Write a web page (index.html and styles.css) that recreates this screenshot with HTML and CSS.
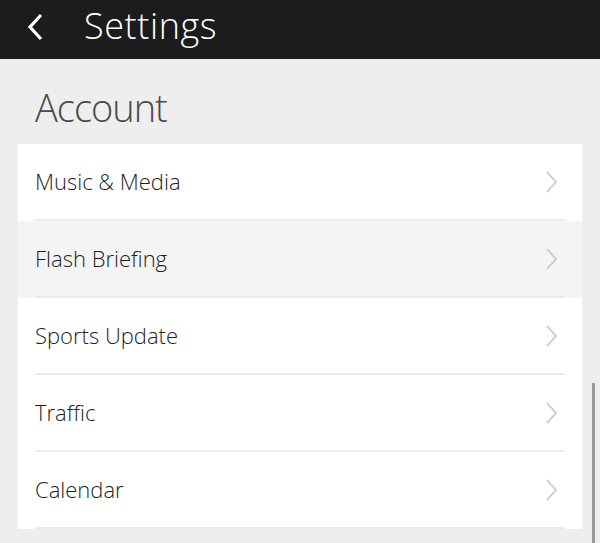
FILE: index.html
```html
<!DOCTYPE html>
<html>
<head>
<meta charset="utf-8">
<link rel="stylesheet" href="styles.css">
</head>
<body>
<header class="topbar">
  <span class="back">
    <svg width="20" height="30" viewBox="0 0 20 30"><path d="M15 3 L4 15 L15 27" fill="none" stroke="#fff" stroke-width="3.2" stroke-linecap="butt" stroke-linejoin="miter"/></svg>
  </span>
  <h1 class="title">Settings</h1>
</header>
<main class="content">
  <h2 class="section">Account</h2>
  <ul class="card">
    <li class="row"><span class="label">Music &amp; Media</span><svg class="chev" width="14" height="24" viewBox="0 0 14 24"><path d="M2 2 L11 12 L2 22" fill="none" stroke="#c9c9c9" stroke-width="1.8"/></svg></li>
    <li class="row active"><span class="label">Flash Briefing</span><svg class="chev" width="14" height="24" viewBox="0 0 14 24"><path d="M2 2 L11 12 L2 22" fill="none" stroke="#c9c9c9" stroke-width="1.8"/></svg></li>
    <li class="row"><span class="label">Sports Update</span><svg class="chev" width="14" height="24" viewBox="0 0 14 24"><path d="M2 2 L11 12 L2 22" fill="none" stroke="#c9c9c9" stroke-width="1.8"/></svg></li>
    <li class="row"><span class="label">Traffic</span><svg class="chev" width="14" height="24" viewBox="0 0 14 24"><path d="M2 2 L11 12 L2 22" fill="none" stroke="#c9c9c9" stroke-width="1.8"/></svg></li>
    <li class="row"><span class="label">Calendar</span><svg class="chev" width="14" height="24" viewBox="0 0 14 24"><path d="M2 2 L11 12 L2 22" fill="none" stroke="#c9c9c9" stroke-width="1.8"/></svg></li>
  </ul>
</main>
<div class="scrollbar"></div>
</body>
</html>
```
FILE: styles.css
```css
html, body {
  margin: 0;
  padding: 0;
  height: 100%;
  overflow: hidden;
}
body {
  background: #eeeeee;
  font-family: "Open Sans", "Noto Sans", sans-serif;
  position: relative;
}
.topbar {
  height: 59px;
  background: #1c1c1c;
  display: flex;
  align-items: center;
  padding-left: 26px;
  box-sizing: border-box;
}
.back {
  display: flex;
  width: 58px;
  margin-top: -6px;
}
.title {
  margin: 0;
  font-size: 36px;
  font-weight: 300;
  color: #ffffff;
  line-height: 1;
  margin-top: -8px;
  letter-spacing: 0.6px;
}
.content {
  padding: 0 18px;
}
.section {
  margin: 0;
  padding: 24px 0 0 17px;
  height: 61px;
  font-size: 38px;
  font-weight: 300;
  color: #4a4a4a;
  line-height: 48px;
  letter-spacing: -1px;
  box-sizing: content-box;
}
.card {
  list-style: none;
  margin: 0;
  padding: 0;
  background: #ffffff;
  width: 564px;
}
.row {
  height: 77px;
  display: flex;
  align-items: center;
  justify-content: space-between;
  padding: 0 23px 0 17px;
  position: relative;
  box-sizing: border-box;
}
.row::after {
  content: "";
  position: absolute;
  left: 17px;
  right: 17px;
  bottom: 0;
  height: 2px;
  background: #ececec;
}
.row.active {
  background: #f4f4f4;
}
.label {
  font-size: 22px;
  font-weight: 300;
  color: #1e1e1e;
  letter-spacing: 0px;
  margin-bottom: 4px;
}
.chev {
  display: block;
  margin-bottom: 2px;
}
.scrollbar {
  position: absolute;
  left: 592px;
  top: 383px;
  width: 3px;
  height: 170px;
  background: #9a9a9a;
}
```
